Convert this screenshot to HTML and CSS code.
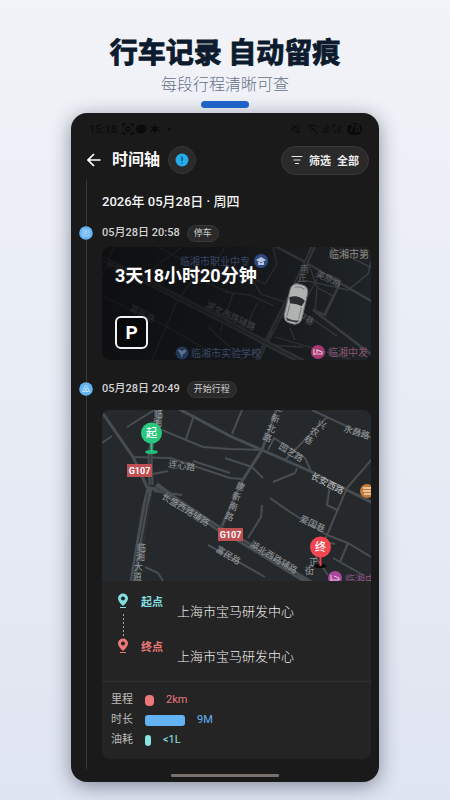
FILE: index.html
```html
<!DOCTYPE html>
<html lang="zh-CN">
<head>
<meta charset="utf-8">
<meta name="viewport" content="width=device-width, initial-scale=1">
<title>行车记录 自动留痕</title>
<link rel="stylesheet" href="styles.css">
</head>
<body>
<header class="promo">
  <h1>行车记录 自动留痕</h1>
  <p>每段行程清晰可查</p>
  <span class="accent"></span>
</header>
<main class="phone">
  <div class="status">
    <span>15:18</span>
    <svg class="status-left" width="52" height="12" viewBox="0 0 52 12">
      <g fill="none" stroke="currentColor" stroke-width="1.3"><path d="M4 1H1v3M8 1h3v3M4 11H1V8M8 11h3V8"/><circle cx="6" cy="6" r="2"/><path d="M33 1v10M28.5 3.5l9 5M37.500 3.500l-9 5"/></g>
      <g fill="currentColor"><ellipse cx="19" cy="6" rx="5.500" ry="4.500"/><circle cx="33" cy="6" r="2.500"/><circle cx="47" cy="6" r="1.400"/></g>
    </svg>
    <svg class="status-right" width="54" height="12" viewBox="0 0 54 12">
      <g fill="none" stroke="currentColor"><path d="M1 5h2l4-3v8L3 7H1zM1 1l8 9"/><path d="M17 4q5-4 10 0M19 7q3-2 6 0M18 1l8 10"/><path d="M31 10V8M33 10V6M35 10V4M37 10V2M41 2h4M42 2v4M44 10V7M47 10V4M49 10V2"/></g>
    </svg>
    <span class="battery">78</span>
  </div>
  <div class="toolbar">
    <button class="back" aria-label="返回"><svg width="14" height="14" viewBox="0 0 14 14"><path d="M13.500 7H1.500M7 1L1 7l6 6" fill="none" stroke="#fff" stroke-width="1.700"/></svg></button>
    <h2>时间轴</h2>
    <button class="info" aria-label="提示"><svg width="14" height="14" viewBox="0 0 14 14"><circle cx="7" cy="7" r="6.500" fill="#23aceb"/><path d="M7 3.500v4.500M7 9.500v1.300" stroke="#17425c" stroke-width="1.300"/></svg></button>
    <button class="filter"><svg width="12" height="10" viewBox="0 0 12 10"><path d="M.5 1.500h11M2.500 5h7M4 8.500h4" stroke="#e8e8e8" stroke-width="1.200"/></svg><span>筛选</span><span>全部</span></button>
  </div>
  <section class="timeline">
    <h3>2026年 05月28日 · 周四</h3>
    <article class="entry">
      <div class="entry-head">
        <svg class="node" width="14" height="14" viewBox="0 0 14 14"><circle cx="7" cy="7" r="6.800" fill="#65b5f3"/><path d="M4 4h6v6H4zM6 9V5.500h2v2H6" fill="none" stroke="#b7defa" stroke-width=".8"/></svg>
        <time>05月28日 20:58</time><span class="tag">停车</span>
      </div>
      <div class="parking">
        <svg class="map" viewBox="102 247 269 113">
          <defs><linearGradient id="shade"><stop offset="0" stop-color="#08090b" stop-opacity=".8"/><stop offset=".45" stop-color="#08090b" stop-opacity=".6"/><stop offset="1" stop-color="#08090b" stop-opacity=".1"/></linearGradient></defs>
          <path fill="#22272a" d="M102 247h269v113H102z"/>
          <g fill="none" stroke="#44494d" stroke-width="1.300">
            <path stroke-width="6" d="M102 258l38 20 90 46 38 20 35 18"/>
            <path stroke-width="5" d="M314 245l-9 20-15 31-18 35-8 15-7 16"/>
            <path stroke-width="2.500" d="M273 245l34 18 33 20 33 19M340 283l-15 32-12-5 59 45M307 262l-17 34"/>
            <path d="M102 296l60 28 40 23M158 247l42 22-25 36-8 20-15 35M225 247l-20 35 28 12-13 38M225 270l27 9 9 15 36 12M225 292l25 3 24 11M257 303l-9 21M208 327l22 20M102 275l12-28M140 278l42-31M273 247l4 17-12 20-13-6M303 280l45 10 20-16 4-15M309 265l8 22-2 25M318 288l15 8-9 18M302 312l35 24M290 328l5 12M275 337l75 22M317 279l-15 28M240 360l28-15 35 2M330 247l42 21"/>
            <path stroke="#24282b" stroke-width="1" d="M102 258l38 20 90 46 38 20 35 18M313 247l-23 49-18 36"/>
          </g>
          <g class="road-name"><text transform="translate(105 266) rotate(25)">长盛西路</text><text transform="translate(129 310) rotate(28)">富民路</text><text transform="translate(205 307) rotate(26)">湖北西路辅路</text><text transform="translate(315 276) rotate(25)">美原路</text><text x="300 298" y="272 281">南正</text><text transform="translate(296 317) rotate(28)">中巷</text></g>
          <path fill="url(#shade)" d="M102 247h269v113H102z"/>
          <g class="poi"><text x="180" y="265" fill="#384564">临湘市职业中专</text><circle cx="261" cy="261" r="7" fill="#304b82"/><path d="M256 260l5-3 5 3-5 3zM258 262v3h6v-3" fill="#b7c3dc"/><text x="191" y="357" fill="#3b4966">临湘市实验学校</text><circle cx="182" cy="353" r="6.500" fill="#223759"/><path d="M178 350q4 0 4 3 0-3 4-3-1 4-4 4v3" fill="#62738d" stroke="#62738d"/><text x="329" y="258" fill="#8d8a80">临湘市第</text><circle cx="318" cy="352" r="7" fill="#a33970"/><path d="M314 349v6M314 354h8v-2l-5-2v3" fill="none" stroke="#e6bfd2" stroke-width="1.200"/><text x="328" y="356" fill="#895773">临湘中发</text></g>
          <g transform="translate(296 304) rotate(13)"><rect x="-9" y="-20" width="18" height="40" rx="7" fill="#b0b2b2" stroke="#6e7274"/><path d="M-8-5q8-5 16 0l-2 6q-6-2-12 0z" fill="#292d2f"/><path d="M-6 2v12M6 2v12M-5-16q5-3 10 0" fill="none" stroke="#777b7d"/><path d="M-7 15q7 3 14 0l-2 3H-5z" fill="#36393b"/></g>
        </svg>
        <div class="parking-content"><strong>3天18小时20分钟</strong><span class="p-mark">P</span></div>
      </div>
    </article>
    <article class="entry trip">
      <div class="entry-head">
        <svg class="node" width="14" height="14" viewBox="0 0 14 14"><circle cx="7" cy="7" r="6.800" fill="#65b5f3"/><path d="M3.500 9.500l2-4 1.500 3 1.500-3 2 4zM5.500 4h3" fill="none" stroke="#c7e6fb" stroke-width=".9"/></svg>
        <time>05月28日 20:49</time><span class="tag">开始行程</span>
      </div>
      <div class="trip-card">
        <svg class="map" viewBox="102 410 269 171">
          <path fill="#25292c" d="M102 410h269v171H102z"/>
          <g fill="none" stroke="#484d51" stroke-width="2" stroke-linejoin="round">
            <path stroke-width="3" d="M102 412l31 45 14 30 11 3M177 408l53 28 32 14 50 22 33 17 30 15M277 408l-15 42-20 31-20 45"/>
            <path stroke-width="6" d="M156 485l20 15 42 28 22 12 57 35 15 9M150 487l-5 20-13 77"/>
            <path stroke-width="5" d="M160 408l-5 20-5 25 1 32"/>
            <path d="M127 427l29-18M193 418l-7 21M162 430l41 17 27 2 32 1M102 443l10-7M133 457l37 1 60 20 12 1M193 461l37 12M225 458l27 9 11 11M242 410l-10 24M312 410l60 28M327 417l-42 43M268 450l6-12 31 20 6 13M297 468l-2 5-22 9M372 459l-25 29-20 47M330 485l-3 20 10 5M270 498l20 14 37 23 21 8 23 14M348 543l-8 19M333 558l30 17M262 505l-1 12-13 21M208 545l22 12 35 20M145 567l13 6 5 8M327 535l-11 23 12 17M148 475l20-4M154 491l28 4M315 540l20 4"/>
            <path stroke="#303539" stroke-width="1" d="M154 486l22 14 42 28 22 12 57 35M148 493l-16 90M152 492l-15 90M158 410l-8 43 1 32"/>
          </g>
          <g class="road-name bright"><text x="154 153" y="417 426">临湘</text><text transform="translate(168 467) rotate(8)">连心路</text><text transform="translate(161 498) rotate(32)">长盛西路辅路</text><text x="137 136 134 133" y="551 560 570 580">临湘大道</text><text x="235 231 228 224" y="488 498 508 518" rotate="20">建新南路</text><text x="274 270 266 262" y="409 420 430 439" rotate="20">建新北路</text><text x="316 309 303" y="426 433 441" rotate="25">兴农巷</text><text transform="translate(278 448) rotate(32)">园艺路</text><text transform="translate(343 431) rotate(18)">永昌路</text><text class="major" transform="translate(310 478) rotate(27)">长安西路</text><text transform="translate(299 521) rotate(25)">爱国巷</text><text transform="translate(249 546) rotate(31)">湖北西路辅路</text><text transform="translate(215 551) rotate(31)">富民路</text><text x="309 305" y="565 574">正街</text></g>
          <g class="route-sign"><rect x="127" y="464" width="25" height="13"/><text x="139.500" y="474">G107</text><rect x="218" y="528" width="25" height="13"/><text x="230.500" y="538">G107</text></g>
          <circle cx="367" cy="491" r="7" fill="#c47835"/><path d="M363 488h8M363 491h8M364 494h7" stroke="#f2d9bc" stroke-width="1.400"/>
          <circle cx="335" cy="578" r="7" fill="#a9479a"/><path d="M331 575v6M331 580h8v-2l-5-2" fill="none" stroke="#f0cde9"/><text class="hotel" x="345" y="583">临湘中</text>
          <ellipse cx="151.500" cy="452" rx="6.500" ry="2" fill="#22b979"/><path stroke="#28c985" stroke-width="2" d="M151.500 442v10"/><circle cx="151.500" cy="433" r="10.500" fill="#2bc77f"/><text class="pin-label" x="151.500" y="437">起</text>
          <ellipse cx="320" cy="566" rx="6.500" ry="2" fill="#080808"/><path stroke="#ee3e48" stroke-width="2" d="M320.500 556v10"/><circle cx="320.500" cy="547" r="10.500" fill="#ef464f"/><text class="pin-label" x="320.500" y="551">终</text>
        </svg>
        <div class="places">
          <div class="place start"><svg class="place-icon" width="12" height="16" viewBox="0 0 12 16"><path d="M6 13S1 8.500 1 5.500a5 5 0 0110 0C11 8.500 6 13 6 13zM3 14h6v1H3z" fill="currentColor"/><circle cx="6" cy="5.500" r="2" fill="#242424"/></svg><b>起点</b><span>上海市宝马研发中心</span></div>
          <span class="dots"></span>
          <div class="place end"><svg class="place-icon" width="12" height="16" viewBox="0 0 12 16"><path d="M6 13S1 8.500 1 5.500a5 5 0 0110 0C11 8.500 6 13 6 13zM3 14h6v1H3z" fill="currentColor"/><circle cx="6" cy="5.500" r="2" fill="#242424"/></svg><b>终点</b><span>上海市宝马研发中心</span></div>
        </div>
        <dl class="stats">
          <div class="distance"><dt>里程</dt><dd><i></i>2km</dd></div>
          <div class="duration"><dt>时长</dt><dd><i></i>9M</dd></div>
          <div class="fuel"><dt>油耗</dt><dd><i></i>&lt;1L</dd></div>
        </dl>
      </div>
    </article>
  </section>
  <div class="home"></div>
</main>
</body>
</html>
```
FILE: styles.css
```css
* { box-sizing: border-box; }
html { min-height: 100%; background: linear-gradient(#f1f3f8, #dfe5f1); }
body { margin: 0; padding: 35px 71px 18px; font-family: Roboto, "Noto Sans CJK SC", sans-serif; color: #e6e6e6; }
h1, h2, h3, p, dl, dd { margin: 0; }
button { border: 0; padding: 0; background: none; color: inherit; font: inherit; }
svg { display: block; flex: none; }

.promo { display: flex; flex-direction: column; align-items: center; white-space: nowrap; font-family: "Noto Sans CJK SC", sans-serif; }
.promo h1 { font-size: 28px; line-height: 32px; font-weight: 700; color: #0d1b2e; -webkit-text-stroke: 1px #0d1b2e; }
.promo p { margin-top: 5px; font-size: 16px; line-height: 22px; font-weight: 300; color: #667085; }
.accent { width: 48px; height: 7px; margin-top: 7px; border-radius: 4px; background: #1f63c6; }

.phone { margin-top: 5px; padding-bottom: 5px; border-radius: 16px; background: #1a1a1a; box-shadow: 0 4px 20px rgb(20 25 50 / 45%); }
.status { display: flex; align-items: center; height: 32px; padding: 0 17px 0 18px; font-size: 11px; font-weight: 500; color: #0b0b0b; }
.status-left { margin-left: 5px; }
.status-right { margin-left: auto; }
.battery { margin-left: 2px; width: 15px; border-radius: 6px; background: #0a0a0a; color: #1f1f1f; font-size: 10px; line-height: 12px; text-align: center; }

.toolbar { display: flex; align-items: center; height: 30px; padding: 0 10px 0 16px; }
.toolbar h2 { margin: 0 8px 0 11px; font-size: 16px; line-height: 24px; font-weight: 700; color: #f8f8f8; }
.info { display: grid; place-items: center; width: 28px; height: 28px; border: 1px solid #373737; border-radius: 50%; background: #2a2a2a; }
.filter { display: flex; align-items: center; gap: 6px; height: 29px; margin-left: auto; padding: 0 9px; border: 1px solid #393939; border-radius: 15px; background: #2a2a2a; font-size: 11px; font-weight: 700; color: #ececec; }

.timeline { position: relative; margin-top: 5px; padding: 12px 8px 10px 31px; }
.timeline::before { content: ""; position: absolute; top: 0; bottom: 0; left: 15px; width: 1px; background: #383838; }
.timeline h3 { margin-bottom: 12px; font-size: 13px; line-height: 20px; font-weight: 500; color: #f4f4f4; }
.entry-head { position: relative; display: flex; align-items: center; gap: 7px; height: 18px; margin-bottom: 5px; font-size: 11px; font-weight: 500; color: #d2d2d2; }
.entry-head time { line-height: 18px; }
.node { position: absolute; left: -23px; }
.tag { padding: 0 6px; border: 1px solid #393939; border-radius: 9px; background: #2a2a2a; font-size: 9px; line-height: 15px; font-weight: 400; color: #cecece; }
.map { width: 100%; height: auto; }
.parking { position: relative; overflow: hidden; border-radius: 8px; }
.parking-content { position: absolute; inset: 0; display: flex; flex-direction: column; align-items: flex-start; justify-content: space-between; padding: 16px 13px 11px; }
.parking-content strong { font-size: 18px; line-height: 26px; font-weight: 700; color: #fff; }
.p-mark { display: grid; place-items: center; width: 33px; height: 33px; border: 2px solid #f2f2f2; border-radius: 6px; background: #08090a; font-size: 19px; line-height: 24px; font-weight: 700; color: #fff; }
.road-name { font-size: 9px; fill: #7e8385; }
.bright { fill: #989c9e; }
.major { fill: #c4c6c7; }
.poi { font-size: 10px; }
.route-sign { font-size: 9px; font-weight: 700; text-anchor: middle; }
.route-sign rect { fill: #bd5053; }
.route-sign text { fill: #fff; }
.hotel { font-size: 10px; fill: #8a5383; }
.pin-label { font-size: 11px; font-weight: 500; fill: #fff; text-anchor: middle; }

.trip { margin-top: 20px; }
.trip .entry-head { margin-bottom: 12px; }
.trip-card { overflow: hidden; border-radius: 8px; background: #242424; }
.places { padding: 12px 15px 15px; }
.place { display: grid; grid-template-columns: 12px 24px 1fr; column-gap: 12px; height: 28px; white-space: nowrap; }
.place b { font-size: 11px; line-height: 20px; font-weight: 700; }
.place span { align-self: end; font-size: 13px; line-height: 18px; font-weight: 300; color: #ededed; }
.start { color: #82dfe1; }
.end { color: #eb7779; }
.dots { display: block; width: 1px; height: 24px; margin: -7px 0 0 6px; background: repeating-linear-gradient(#a9a9a9 0 2px, transparent 2px 4px); }
.stats { padding: 8px 9px 9px; border-top: 1px solid #303030; }
.stats div { display: flex; align-items: center; height: 20px; }
.stats dt { width: 34px; font-size: 11px; line-height: 20px; color: #bdbdbd; }
.stats dd { display: flex; align-items: center; gap: 12px; font-size: 11px; line-height: 20px; }
.stats i { width: 9px; height: 11px; border-radius: 4px; background: currentColor; }
.distance dd { color: #ec7779; }
.duration dd { color: #63b3f4; }
.duration i { width: 40px; border-radius: 3px; }
.fuel dd { color: #8be2e1; }
.fuel i { width: 6px; border-radius: 3px; }
.home { width: 35%; height: 3px; margin: 5px auto 0; border-radius: 1px; background: #77716e; }
```
